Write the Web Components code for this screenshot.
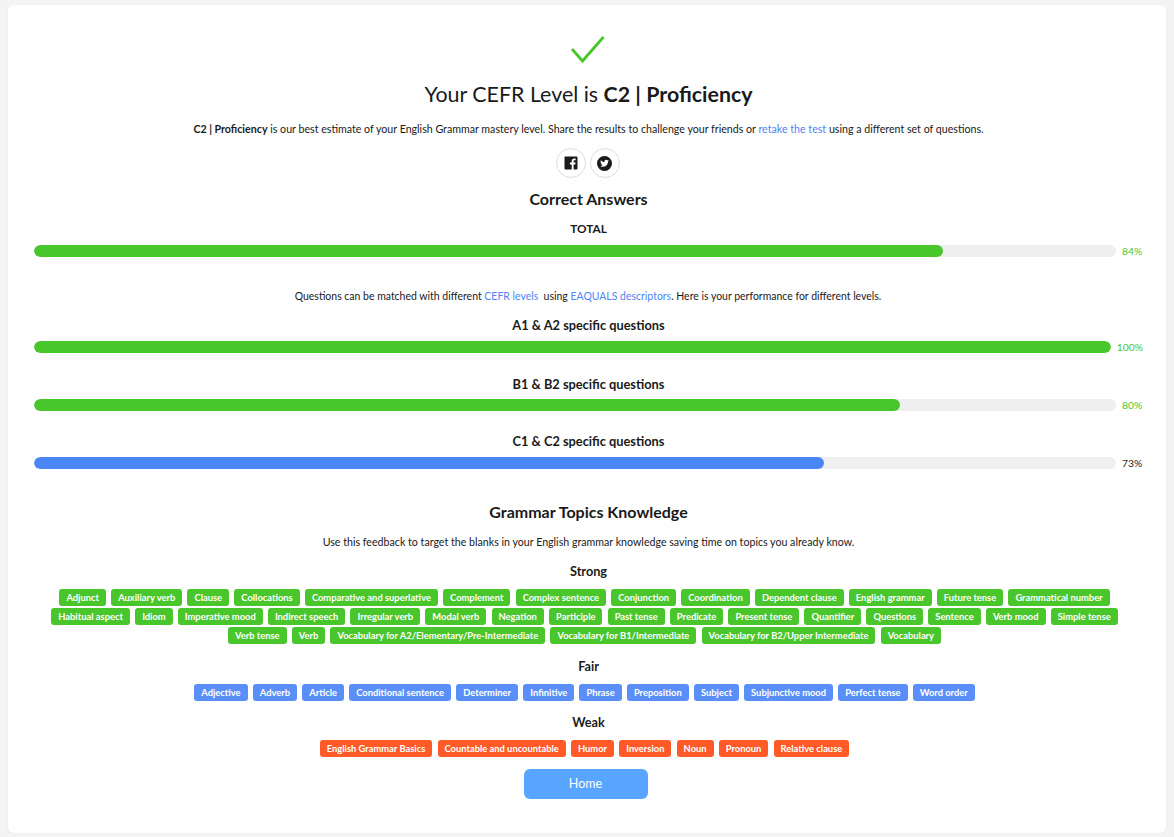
<!DOCTYPE html>
<html lang="en"><head><meta charset="utf-8"><title>CEFR result</title>
<style>
html,body{margin:0;padding:0}
body{background:#f4f4f4;font-family:Lato,sans-serif;color:#1a1a1a}
</style></head>
<body>
<result-page></result-page>
<script>
const FONT='Lato,"Noto Sans",sans-serif';
function def(name,html,init){
  customElements.define(name,class extends HTMLElement{
    constructor(){super();this.attachShadow({mode:'open'}).innerHTML=html;}
    connectedCallback(){init&&init(this);}
  });
}
def('x-heading',`<style>:host{display:block;text-align:center;font-size:var(--fs,16px);line-height:var(--lh,22px);font-weight:var(--fw,700);color:#1a1a1a}</style><slot></slot>`);
def('x-para',`<style>:host{display:block;text-align:center;font-size:10.65px;line-height:16px;color:#1a1a1a}</style><slot></slot>`);
def('x-social',`<style>:host{display:inline-flex;width:28px;height:28px;border:1px solid #ddd;border-radius:50%;align-items:center;justify-content:center}</style><slot></slot>`);
def('x-bar',`<style>
:host{display:flex;align-items:center;gap:6px;height:12px;--c:#4ac62d}
.t{flex:1;height:12px;background:#efefef;border-radius:6px;overflow:hidden}
.f{height:100%;background:var(--c);border-radius:6px}
.l{min-width:21px;font-size:10.3px;line-height:12px;color:var(--lc,var(--c))}
</style><div class="t"><div class="f"></div></div><div class="l"></div>`,el=>{
  const p=el.getAttribute('value');
  el.shadowRoot.querySelector('.f').style.width=p+'%';
  el.shadowRoot.querySelector('.l').textContent=p+'%';
});
def('x-tag',`<style>:host{display:block;height:17px;padding:0 7px;border-radius:3px;background:var(--tag);color:#fff;font-size:9.35px;line-height:17px;font-weight:700;white-space:nowrap}</style><slot></slot>`);
def('x-tags',`<style>:host{display:flex;flex-wrap:wrap;justify-content:center;gap:2px 5.2px;padding-right:8px}</style><slot></slot>`,el=>{
  if(el.childElementCount)return;
  el.getAttribute('items').split('|').forEach(t=>{const g=document.createElement('x-tag');g.textContent=t;el.appendChild(g);});
});
def('x-button',`<style>:host{display:block;width:124px;height:30px;margin:0 auto;background:#58a5ff;color:#fff;border-radius:6px;text-align:center;font-size:12.5px;line-height:30px}</style><slot></slot>`);
def('result-page',`<style>
:host{display:block;box-sizing:border-box;width:1158px;height:828px;margin:5px 8px 0;background:#fff;border-radius:6px;padding:29px 23px 0 26px;font-family:${FONT};box-shadow:0 1px 3px rgba(0,0,0,.06)}
.check{display:block;margin:0 auto;width:36px;height:30px;position:relative;left:-.5px}
.soc{display:flex;justify-content:center;gap:4px;margin-top:11px;padding-right:2px}
.soc svg{display:block}
</style>
<svg class="check" viewBox="0 0 36 30"><path d="M2 15 L12.500 27 L33.500 3" fill="none" stroke="#4ac62d" stroke-width="2.800"/></svg>
<x-heading style="--fs:21.4px;--lh:30px;margin-top:15px;--fw:400"><slot name="title"></slot></x-heading>
<x-para style="margin-top:12px"><slot name="intro"></slot></x-para>
<div class="soc">
<x-social><svg width="14" height="14" viewBox="0 0 14 14"><path fill="#1a1a1a" d="M1.5 .5h11a1 1 0 0 1 1 1v11a1 1 0 0 1-1 1H9.6V8.4h1.7l.3-2H9.6V5.2c0-.6.2-1 1-1h1V2.500c-.3 0-.8-.1-1.400-.1-1.500 0-2.500.9-2.500 2.600v1.400H5.900v2h1.800v5.100H1.500a1 1 0 0 1-1-1v-11a1 1 0 0 1 1-1z"/></svg></x-social>
<x-social><svg width="15" height="15" viewBox="0 0 24 24"><path fill="#1a1a1a" fill-rule="evenodd" d="M12 0a12 12 0 1 1 0 24a12 12 0 0 1 0-24zM18.900 7.300c-.5.2-1 .4-1.600.4.6-.3 1-.9 1.200-1.500-.5.3-1.100.6-1.800.7a2.800 2.800 0 0 0-4.800 2.600C9.600 9.400 7.500 8.300 6.100 6.600c-.8 1.300-.4 3 .9 3.800-.5 0-.9-.1-1.300-.4 0 1.400 1 2.500 2.300 2.800-.4.1-.8.100-1.300 0 .4 1.100 1.400 1.900 2.600 2-1.200.9-2.700 1.300-4.200 1.100 3.800 2.400 8.700 1.500 11.100-2.200.9-1.400 1.300-3 1.300-4.500.5-.5 1-1 1.400-1.900z"/></svg></x-social>
</div>
<x-heading style="--fs:16px;--lh:20px;margin-top:11px">Correct Answers</x-heading>
<x-heading style="--fs:11.8px;--lh:18px;margin-top:11px">TOTAL</x-heading>
<x-bar value="84" style="margin-top:7px"></x-bar>
<x-para style="margin-top:31px;font-size:10.47px;padding-right:1px"><slot name="match"></slot></x-para>
<x-heading style="--fs:12.8px;--lh:18px;margin-top:12px">A1 &amp; A2 specific questions</x-heading>
<x-bar value="100" style="margin-top:7px"></x-bar>
<x-heading style="--fs:12.8px;--lh:18px;margin-top:22px">B1 &amp; B2 specific questions</x-heading>
<x-bar value="80" style="margin-top:6px"></x-bar>
<x-heading style="--fs:12.8px;--lh:18px;margin-top:21px">C1 &amp; C2 specific questions</x-heading>
<x-bar value="73" style="margin-top:7px;--c:#4a86f5;--lc:#1a1a1a"></x-bar>
<x-heading style="--fs:16px;--lh:20px;margin-top:33px">Grammar Topics Knowledge</x-heading>
<x-para style="margin-top:12px">Use this feedback to target the blanks in your English grammar knowledge saving time on topics you already know.</x-para>
<x-heading style="--fs:12.7px;--lh:18px;margin-top:12px">Strong</x-heading>
<x-tags style="--tag:#4ac62d;margin-top:9px" items="Adjunct|Auxiliary verb|Clause|Collocations|Comparative and superlative|Complement|Complex sentence|Conjunction|Coordination|Dependent clause|English grammar|Future tense|Grammatical number|Habitual aspect|Idiom|Imperative mood|Indirect speech|Irregular verb|Modal verb|Negation|Participle|Past tense|Predicate|Present tense|Quantifier|Questions|Sentence|Verb mood|Simple tense|Verb tense|Verb|Vocabulary for A2/Elementary/Pre-Intermediate|Vocabulary for B1/Intermediate|Vocabulary for B2/Upper Intermediate|Vocabulary"></x-tags>
<x-heading style="--fs:12.7px;--lh:18px;margin-top:13px">Fair</x-heading>
<x-tags style="--tag:#5a8ffa;margin-top:9px" items="Adjective|Adverb|Article|Conditional sentence|Determiner|Infinitive|Phrase|Preposition|Subject|Subjunctive mood|Perfect tense|Word order"></x-tags>
<x-heading style="--fs:12.7px;--lh:18px;margin-top:12px">Weak</x-heading>
<x-tags style="--tag:#ff5a27;margin-top:9px" items="English Grammar Basics|Countable and uncountable|Humor|Inversion|Noun|Pronoun|Relative clause"></x-tags>
<x-button style="margin-top:12px;position:relative;left:-3px">Home</x-button>`);
const page=document.querySelector('result-page');
const A='style="color:#4d84f7;text-decoration:none"';
page.innerHTML=`<span slot="title">Your CEFR Level is <b>C2 | Proficiency</b></span>
<span slot="intro"><b>C2 | Proficiency</b> is our best estimate of your English Grammar mastery level. Share the results to challenge your friends or <a href="#" ${A}>retake the test</a> using a different set of questions.</span>
<span slot="match">Questions can be matched with different <a href="#" ${A}>CEFR levels</a>&nbsp; using <a href="#" ${A}>EAQUALS descriptors</a>. Here is your performance for different levels.</span>`;
</script>
</body></html>
